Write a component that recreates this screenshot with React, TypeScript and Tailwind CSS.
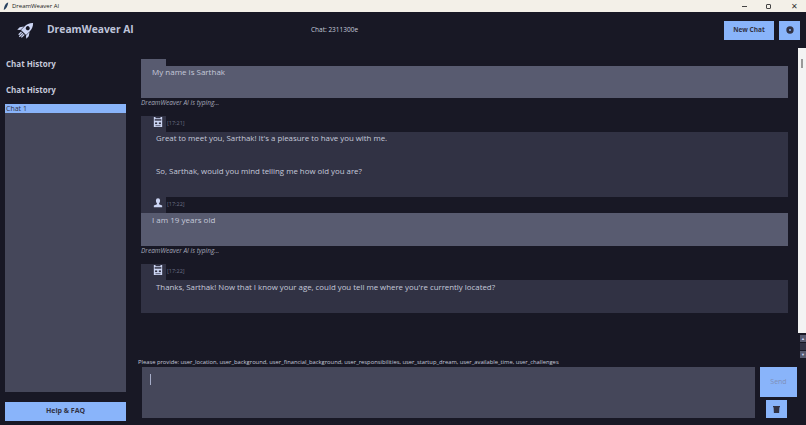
import React from 'react';

const FONT = "font-['Open_Sans','Noto_Sans',sans-serif]";

const RocketLogo = () => (
  <svg viewBox="0 0 20 20" className="h-[20px] w-[20px] text-[#cdd6f4]" fill="currentColor">
    <g transform="rotate(45 10 10)">
      <path d="M10 0c2.600 2.400 3.600 5.400 3.600 8.500v5h-7.200v-5C6.400 5.400 7.400 2.400 10 0z" />
      <path d="M6 9 3.600 12.500V16L6 14zM14 9l2.400 3.500V16L14 14z" />
      <circle cx="10" cy="7.500" r="2" fill="#181825" />
      <rect x="7.500" y="14.500" width="1.300" height="4" />
      <rect x="9.400" y="14.500" width="1.300" height="5" />
      <rect x="11.300" y="14.500" width="1.300" height="4" />
    </g>
  </svg>
);

const BotIcon = () => (
  <svg viewBox="0 0 12 12" className="h-[10px] w-[10px] text-[#cdd6f4]" fill="currentColor">
    <path d="M1 0h2v1.500h6V0h2v12H1z" />
    <rect x="2" y="2.500" width="8" height="2" fill="#45475a" />
    <rect x="2.500" y="6.500" width="2.500" height="2" fill="#313244" />
    <rect x="7" y="6.500" width="2.500" height="2" fill="#313244" />
    <rect x="3" y="10" width="6" height="1" fill="#45475a" />
  </svg>
);

const UserIcon = () => (
  <svg viewBox="0 0 12 12" className="h-[10px] w-[10px] text-[#cdd6f4]" fill="currentColor">
    <path d="M3.500 3a2.500 2.800 0 0 1 5 0c0 1.500-.7 3-1.300 3.500v1l3.800 1.500v2H1V9l3.800-1.500v-1C4.200 6 3.500 4.500 3.500 3z" />
  </svg>
);

const GearIcon = () => (
  <svg viewBox="0 0 12 12" className="h-[8px] w-[8px] text-[#313244]" fill="currentColor">
    <path fillRule="evenodd" d="M6 .5a5.500 5.500 0 1 0 0 11 5.500 5.500 0 0 0 0-11zM6 4.500a1.500 1.500 0 1 1 0 3 1.500 1.500 0 0 1 0-3z" />
  </svg>
);

const Tag = ({ icon, time }: { icon: React.ReactNode; time: string }) => (
  <div className="flex h-[16px] items-start">
    <div className="flex h-full w-[25px] items-start justify-end bg-[#313244] pr-[3px] pt-[1px]">{icon}</div>
    <span className="ml-[1px] pt-[1px] text-[5.500px] leading-[12px] text-[#6c7086]">{time}</span>
  </div>
);

const Typing = () => (
  <p className="h-[10px] text-[6.500px] italic leading-[10px] text-[#a6a9ba]">DreamWeaver AI is typing...</p>
);

const App: React.FC = () => {
  return (
    <div className={`flex h-[425px] w-[806px] flex-col overflow-hidden bg-[#181825] ${FONT}`}>
      {/* window title bar */}
      <div className="flex h-[12px] items-center bg-[#f3f0e8] pl-[2px]">
        <svg viewBox="0 0 8 10" className="h-[9px] w-[8px]">
          <path d="M6.500.5C4 1 2 3.500 1.500 9c2.500-1.500 4.500-4.500 5-8.500z" fill="#26405f" />
        </svg>
        <span className="ml-[2px] text-[6px] text-[#222222]">DreamWeaver AI</span>
        <div className="ml-auto flex items-center text-[#333333]">
          <span className="mr-[19px] h-[1px] w-[5px] bg-[#444444]" />
          <span className="mr-[20px] h-[5px] w-[5px] rounded-[1px] border border-[#444444]" />
          <span className="mr-[8px] text-[8px] leading-[12px]">✕</span>
        </div>
      </div>

      {/* header */}
      <header className="flex h-[36px] items-center">
        <div className="ml-[16px] flex w-[295px] items-center">
          <RocketLogo />
          <span className="ml-[11px] text-[10.300px] font-bold text-[#bfc4da]">DreamWeaver AI</span>
        </div>
        <span className="text-[6.500px] text-[#c5c9da]">Chat: 2311300e</span>
        <button className="ml-auto flex h-[19px] w-[50px] items-center justify-center bg-[#89b4fa] text-[6.500px] font-bold text-[#313244]">
          New Chat
        </button>
        <button className="ml-[5px] mr-[6px] flex h-[19px] w-[21px] items-center justify-center bg-[#89b4fa]">
          <GearIcon />
        </button>
      </header>

      <div className="flex min-h-0 flex-1">
        {/* sidebar */}
        <aside className="flex w-[141px] flex-col pb-[4px] pl-[5px] pr-[15px]">
          <h2 className="mt-[9px] pl-[1px] text-[8px] font-bold leading-[14px] text-[#c5c9da]">Chat History</h2>
          <h2 className="mt-[12px] pl-[1px] text-[8px] font-bold leading-[14px] text-[#c5c9da]">Chat History</h2>
          <div className="mt-[7px] flex-1 bg-[#45475a]">
            <div className="h-[9px] bg-[#89b4fa] pl-[1px] text-[7px] leading-[9px] text-[#313244]">Chat 1</div>
          </div>
          <button className="mt-[10px] h-[19px] bg-[#89b4fa] text-[7px] font-bold text-[#313244]">Help &amp; FAQ</button>
        </aside>

        {/* chat + input */}
        <main className="flex min-w-0 flex-1 flex-col">
          <div className="flex min-h-0 flex-1">
            <div className="min-w-0 flex-1 pr-[10px] pt-[11px]">
              <div className="h-[7px] w-[25px] bg-[#585b70]" />
              <div className="h-[32px] bg-[#585b70] pl-[11px] text-[8px] leading-[12px] text-[#c5c9da]">My name is Sarthak</div>
              <Typing />
              <div className="mt-[8px]">
                <Tag icon={<BotIcon />} time="[17:21]" />
                <div className="h-[65px] bg-[#313244] pl-[15px] text-[7.850px] leading-[12px] text-[#c5c9da]">
                  <p>Great to meet you, Sarthak! It's a pleasure to have you with me.</p>
                  <p className="mt-[21px]">So, Sarthak, would you mind telling me how old you are?</p>
                </div>
              </div>
              <Tag icon={<UserIcon />} time="[17:22]" />
              <div className="h-[33px] bg-[#585b70] pl-[11px] pt-[1px] text-[8px] leading-[12px] text-[#c5c9da]">I am 19 years old</div>
              <Typing />
              <div className="mt-[8px]">
                <Tag icon={<BotIcon />} time="[17:22]" />
                <div className="h-[33px] bg-[#313244] pl-[15px] pt-[1px] text-[7.850px] leading-[12px] text-[#c5c9da]">
                  Thanks, Sarthak! Now that I know your age, could you tell me where you're currently located?
                </div>
              </div>
            </div>
            {/* scrollbar */}
            <div className="flex w-[8px] flex-col">
              <div className="flex-1 bg-[#f3f3f3] pt-[11px]">
                <div className="mx-auto h-[9px] w-[2px] bg-[#999999]" />
              </div>
              <div className="flex h-[25px] flex-col justify-end gap-[1px] pl-[2px] text-[4px] leading-[7px] text-[#cdd6f4]">
                <span className="block h-[7px] bg-[#585b70] text-center">▲</span>
                <span className="block h-[7px] bg-[#313244]" />
                <span className="block h-[7px] bg-[#585b70] text-center">▼</span>
              </div>
            </div>
          </div>

          <p className="ml-[-3px] h-[9px] text-[5.800px] leading-[9px] text-[#c5c9da]">
            Please provide: user_location, user_background, user_financial_background, user_responsibilities, user_startup_dream, user_available_time, user_challenges
          </p>
          <div className="flex h-[58px] items-start">
            <div className="ml-[1px] h-[51px] w-[613px] bg-[#45475a] pl-[8px] pt-[7px]">
              <div className="h-[11px] w-[1px] bg-[#a6adc8]" />
            </div>
            <div className="ml-[5px] flex w-[37px] flex-col items-center">
              <button className="flex h-[30px] w-[37px] items-center justify-center bg-[#89b4fa] text-[7px] text-[#7f8fb8]">
                Send
              </button>
              <button className="mr-[5px] mt-[3px] flex h-[18px] w-[21px] items-center justify-center bg-[#89b4fa]">
                <svg viewBox="0 0 8 8" className="h-[7px] w-[7px]" fill="#313244">
                  <path d="M0 0h8v1.500H7.300L7 8H1L.7 1.500H0z" />
                </svg>
              </button>
            </div>
          </div>
        </main>
      </div>
    </div>
  );
};

export default App;
